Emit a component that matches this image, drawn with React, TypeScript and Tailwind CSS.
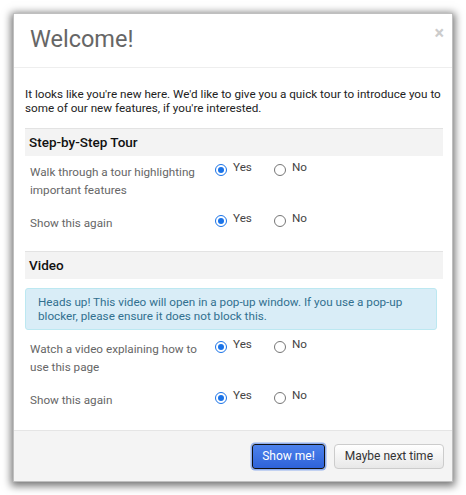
import React from "react";

function Radio({ checked }: { checked: boolean }) {
  return checked ? (
    <span className="inline-flex h-[12px] w-[12px] shrink-0 items-center justify-center rounded-full border-[1.5px] border-[#1a73e8] bg-white">
      <span className="h-[6px] w-[6px] rounded-full bg-[#1a73e8]" />
    </span>
  ) : (
    <span className="inline-block h-[12px] w-[12px] shrink-0 rounded-full border border-[#767676] bg-white" />
  );
}

function ChoiceRow({ label, top }: { label: React.ReactNode; top: string }) {
  return (
    <div className={`flex ${top}`}>
      <div className="w-[190px] pl-[5px] text-[11.7px] leading-[18px] text-[#666]">{label}</div>
      <div className="flex items-start">
        <label className="flex items-center gap-[6px]">
          <Radio checked />
          <span className="-mt-[4px] text-[11.7px] text-[#444]">Yes</span>
        </label>
        <label className="ml-[22px] flex items-center gap-[6px]">
          <Radio checked={false} />
          <span className="-mt-[4px] text-[11.7px] text-[#444]">No</span>
        </label>
      </div>
    </div>
  );
}

function SectionHeader({ title }: { title: string }) {
  return (
    <div className="flex h-[28px] items-center border-t border-[#e3e3e3] bg-[#f3f3f3] pl-[4px] text-[13.5px] font-medium text-[#111]">
      {title}
    </div>
  );
}

export default function App() {
  return (
    <div className="min-h-[495px] bg-white p-[13px] font-['Roboto',sans-serif]">
      <div className="w-[440px] border border-[rgba(0,0,0,0.25)] bg-white shadow-[0_2px_8px_2px_rgba(0,0,0,0.55)]">
        {/* header */}
        <div className="flex h-[54px] items-start justify-between border-b border-[#eee] pl-[16px] pr-[8px]">
          <h1 className="pt-[10px] text-[23.5px] leading-[30px] text-[#666]">Welcome!</h1>
          <span className="pt-[9px] text-[18px] leading-[20px] font-bold text-[#ccc]">×</span>
        </div>

        {/* body */}
        <div className="pl-[11px] pr-[9px] pt-[19px] pb-[21px]">
          <p className="text-[11.7px] leading-[14px] text-[#222]">
            It looks like you're new here. We'd like to give you a quick tour to introduce you to some of our new
            features, if you're interested.
          </p>

          <div className="mt-[13px]">
            <SectionHeader title="Step-by-Step Tour" />
            <ChoiceRow
              top="pt-[7px]"
              label={
                <>
                  Walk through a tour highlighting
                  <br />
                  important features
                </>
              }
            />
            <ChoiceRow top="pt-[15px]" label="Show this again" />
          </div>

          <div className="mt-[19px]">
            <SectionHeader title="Video" />
            <div className="mr-[6px] mt-[9px] rounded-[3px] border border-[#bce8f1] bg-[#d9edf7] px-[12px] py-[6px] text-[11.7px] leading-[14px] text-[#31708f]">
              Heads up! This video will open in a pop-up window. If you use a pop-up blocker, please ensure it does
              not block this.
            </div>
            <ChoiceRow
              top="pt-[10px]"
              label={
                <>
                  Watch a video explaining how to
                  <br />
                  use this page
                </>
              }
            />
            <ChoiceRow top="pt-[15px]" label="Show this again" />
          </div>
        </div>

        {/* footer */}
        <div className="flex h-[51px] items-center justify-end gap-[9px] border-t border-[#e5e5e5] bg-[#f4f4f4] pr-[8px]">
          <button className="h-[25px] rounded-[3px] border border-[#111] bg-gradient-to-b from-[#4d82ec] to-[#2e62d9] px-[9px] text-[12px] text-white shadow-[0_0_0_1.5px_rgba(80,130,235,0.6)]">
            Show me!
          </button>
          <button className="h-[25px] rounded-[4px] border border-[#ccc] bg-gradient-to-b from-[#fff] to-[#e8e8e8] px-[10px] text-[12px] text-[#333]">
            Maybe next time
          </button>
        </div>
      </div>
    </div>
  );
}
